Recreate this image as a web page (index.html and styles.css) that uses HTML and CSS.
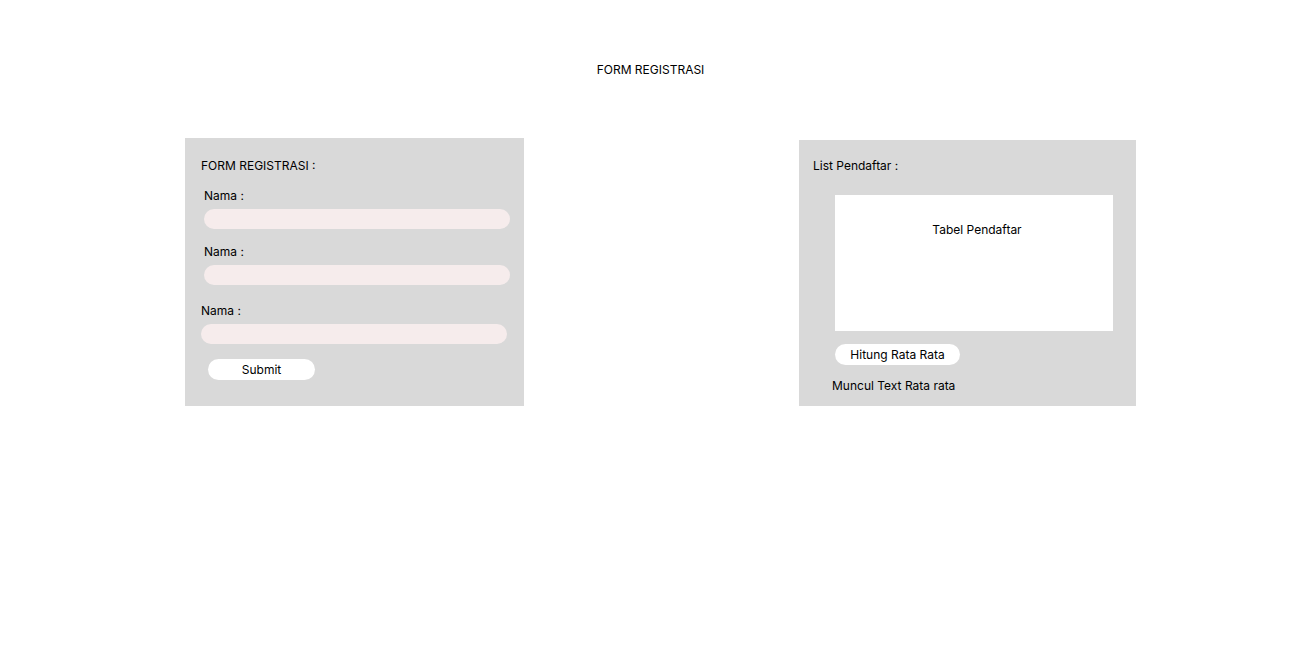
FILE: index.html
```html
<!DOCTYPE html>
<html>
<head>
<meta charset="utf-8">
<link rel="stylesheet" href="styles.css">
</head>
<body>
<h1 class="page-title">FORM REGISTRASI</h1>
<main class="panels">
  <section class="panel panel-form">
    <div class="panel-title">FORM REGISTRASI :</div>
    <div class="field field-a">
      <label class="label">Nama :</label>
      <div class="input"></div>
    </div>
    <div class="field field-a field-second">
      <label class="label">Nama :</label>
      <div class="input"></div>
    </div>
    <div class="field field-b">
      <label class="label">Nama :</label>
      <div class="input"></div>
    </div>
    <button class="btn btn-submit">Submit</button>
  </section>
  <section class="panel panel-list">
    <div class="panel-title">List Pendaftar :</div>
    <div class="table-box">Tabel Pendaftar</div>
    <button class="btn btn-avg">Hitung Rata Rata</button>
    <div class="avg-text">Muncul Text Rata rata</div>
  </section>
</main>
</body>
</html>
```
FILE: styles.css
```css
* { box-sizing: border-box; }
html, body { margin: 0; padding: 0; background: #fff; }
body {
  font-family: Inter, "Liberation Sans", sans-serif;
  font-size: 12px;
  line-height: 16px;
  color: #000;
  width: 1301px;
  height: 661px;
  overflow: hidden;
}
.page-title {
  margin: 0;
  padding-top: 62px;
  font-size: 12px;
  font-weight: 400;
  line-height: 16px;
  text-align: center;
}
.panels {
  display: flex;
  align-items: flex-start;
  padding-left: 185px;
  margin-top: 60px;
  gap: 275px;
}
.panel {
  background: #d9d9d9;
  display: flex;
  flex-direction: column;
  align-items: flex-start;
}
.panel-form {
  width: 339px;
  height: 268px;
  padding: 20px 0 0 16px;
}
.panel-list {
  width: 337px;
  height: 266px;
  margin-top: 2px;
  padding: 18px 0 0 14px;
}
.field { display: flex; flex-direction: column; }
.field-a { margin-left: 3px; margin-top: 14px; }
.field-second { margin-top: 15px; }
.field-b { margin-left: 0; margin-top: 18px; }
.label { display: block; height: 16px; }
.input {
  margin-top: 5px;
  width: 306px;
  height: 20px;
  border-radius: 10px;
  background: #f6ecec;
}
.btn {
  border: none;
  background: #fff;
  font: inherit;
  color: #000;
  padding: 0;
  height: 21px;
  border-radius: 10.5px;
  text-align: center;
}
.btn-submit {
  margin-top: 15px;
  margin-left: 7px;
  width: 107px;
}
.table-box {
  margin-top: 21px;
  margin-left: 22px;
  width: 278px;
  height: 136px;
  background: #fff;
  padding: 27px 0 0 6px;
  text-align: center;
}
.btn-avg {
  margin-top: 13px;
  margin-left: 22px;
  width: 125px;
}
.avg-text {
  margin-top: 13px;
  margin-left: 19px;
}
```
